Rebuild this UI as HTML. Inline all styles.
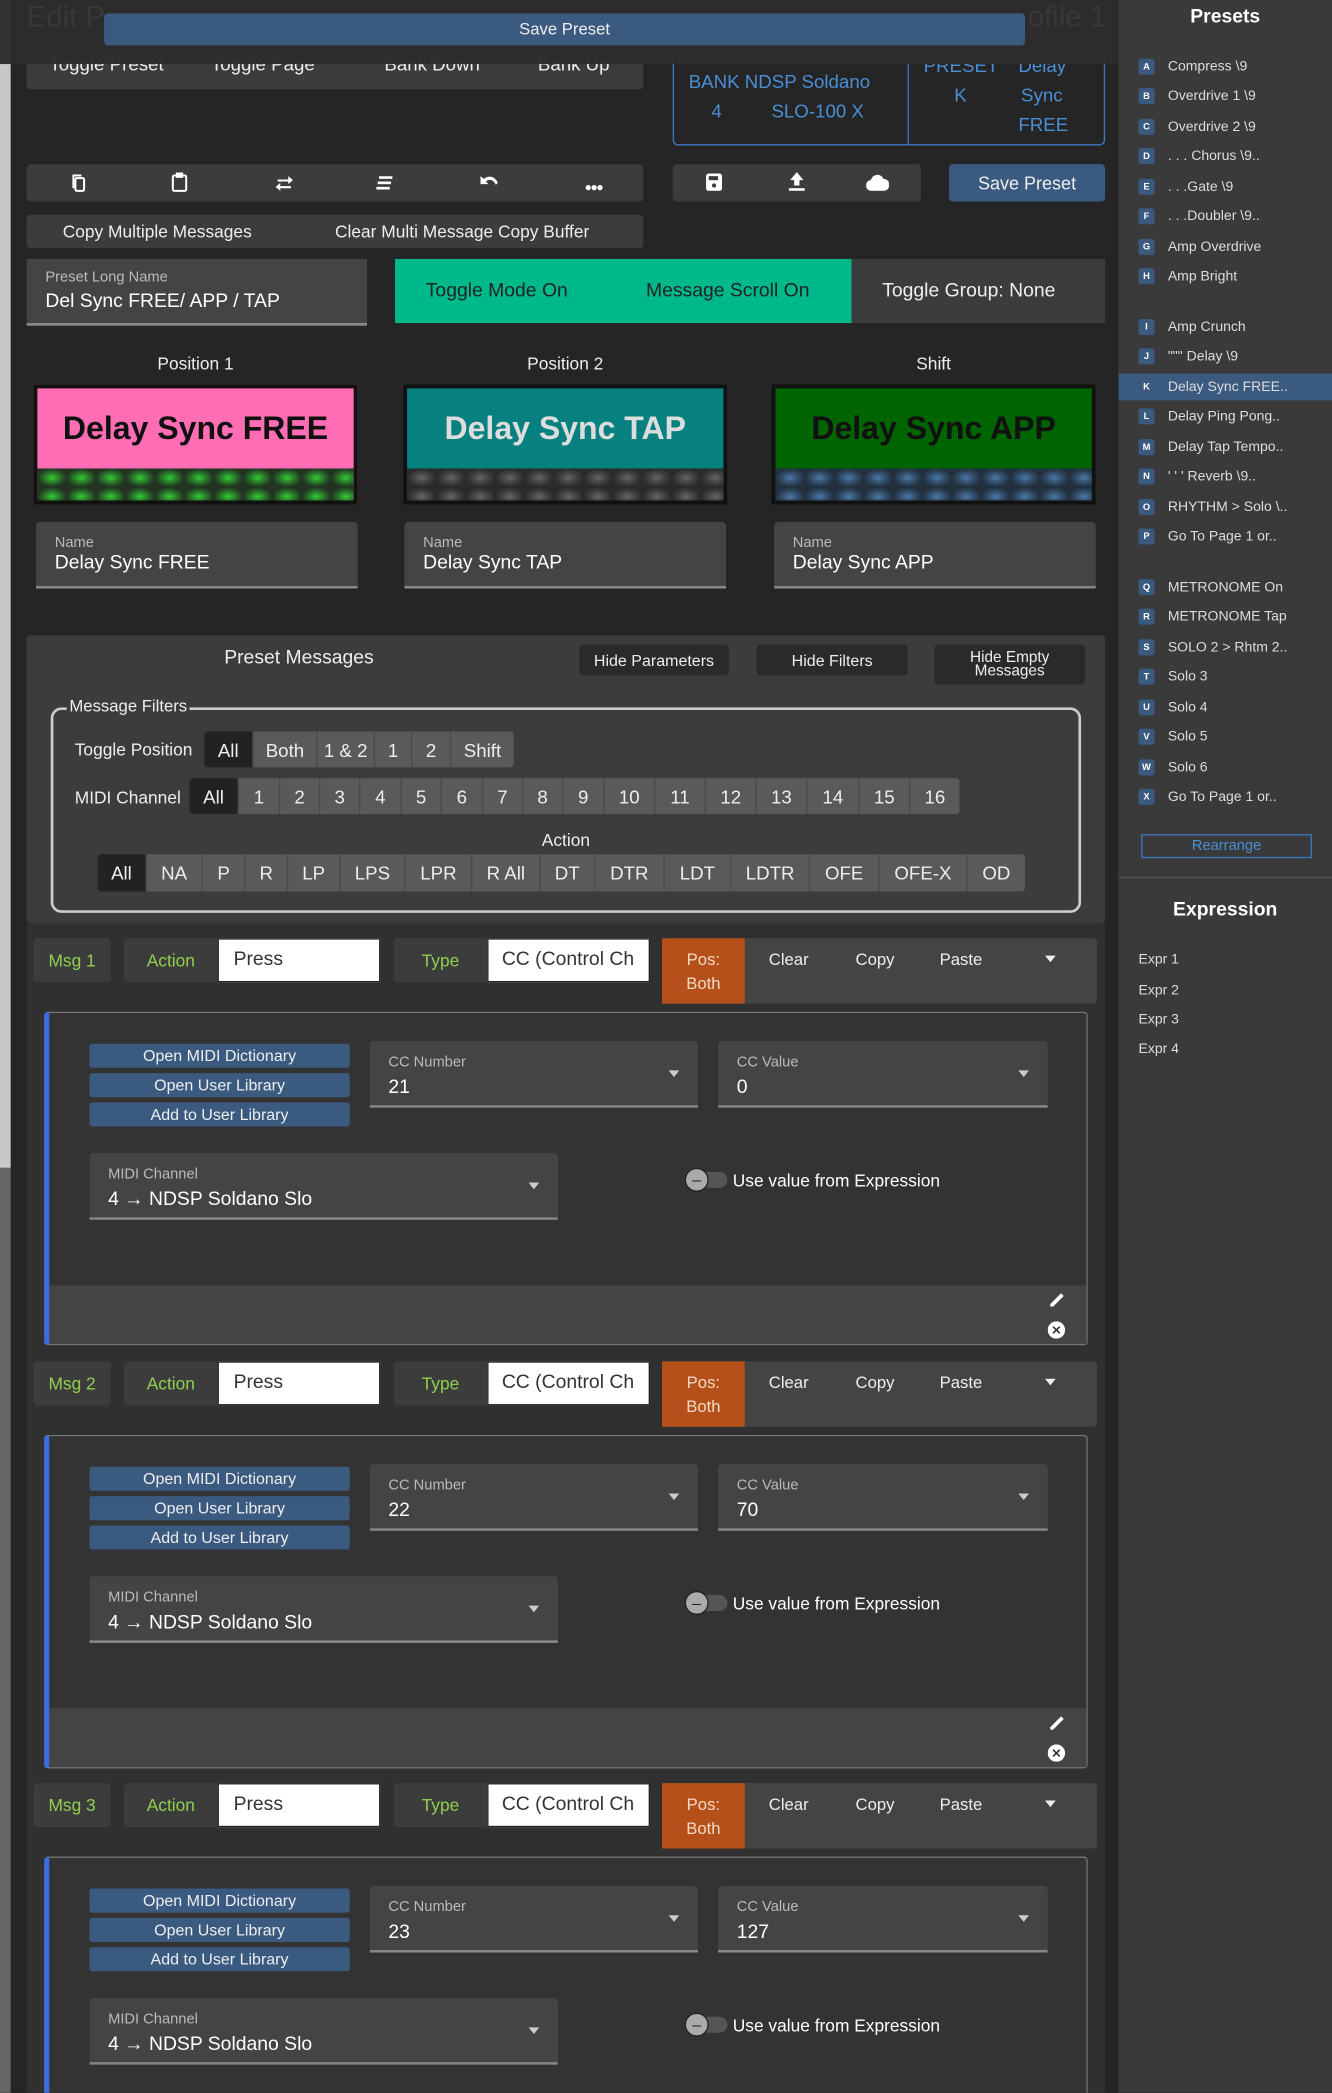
<!DOCTYPE html>
<html><head><meta charset="utf-8"><style>
*{box-sizing:border-box;margin:0;padding:0}
html,body{width:1332px;height:2092px;overflow:hidden;background:#252525}
#w{position:absolute;left:0;top:0;width:998px;height:1568px;transform:scale(1.33467);transform-origin:0 0;font-family:"Liberation Sans",sans-serif;color:#ddd;background:#252525;overflow:hidden}
.a{position:absolute}
.c{display:flex;align-items:center;justify-content:center}
.btn{background:#3c3c3c;border-radius:3px}
.blue{background:#3b5a80;color:#eee;border-radius:2px}
.seg{display:flex;position:absolute;height:27px;border-radius:3px;overflow:hidden}
.seg span{background:#5a5a5a;color:#eee;font-size:14px;display:flex;align-items:center;justify-content:center;border-right:1px solid #4a4a4a}
.seg span.on{background:#222}
.side{position:absolute;left:853px;font-size:10.5px;color:#ddd;display:flex;align-items:center}
.side b{display:inline-flex;width:12px;height:12px;background:#3b5a80;color:#fff;font-size:7px;align-items:center;justify-content:center;border-radius:2px;margin-right:10px}
.fld{position:absolute;background:#444;border-bottom:2px solid #888;border-radius:3px 3px 0 0}
.fld .l{position:absolute;left:14px;top:10px;font-size:11px;color:#bbb}
.fld .v{position:absolute;left:14px;top:27px;font-size:14.5px;color:#fff}
.fld .ar{position:absolute;right:14px;top:22px;width:0;height:0;border-left:4px solid transparent;border-right:4px solid transparent;border-top:5px solid #ccc}
.pat{position:absolute;left:0;right:0;top:60px;bottom:0;background-size:22px 14px}
</style></head><body><div id="w">
<div class="a" style="left:0;top:0;width:8px;height:875px;background:#c8c8c8"></div>
<div class="a" style="left:0;top:875px;width:8px;height:700px;background:#666"></div>
<div class="a" style="left:838px;top:0;width:160px;height:1568px;background:#3a3a3a"></div>
<div class="a" style="left:838px;top:5px;width:160px;text-align:center;font-weight:bold;font-size:14.5px;color:#fff">Presets</div>
<div class="a" style="left:838px;top:280px;width:160px;height:20px;background:#3b5a80"></div>
<div class="side" style="top:44px"><b>A</b>Compress \9</div>
<div class="side" style="top:66px"><b>B</b>Overdrive 1 \9</div>
<div class="side" style="top:89px"><b>C</b>Overdrive 2 \9</div>
<div class="side" style="top:111px"><b>D</b>. . . Chorus \9..</div>
<div class="side" style="top:134px"><b>E</b>. . .Gate \9</div>
<div class="side" style="top:156px"><b>F</b>. . .Doubler \9..</div>
<div class="side" style="top:179px"><b>G</b>Amp Overdrive</div>
<div class="side" style="top:201px"><b>H</b>Amp Bright</div>
<div class="side" style="top:239px"><b>I</b>Amp Crunch</div>
<div class="side" style="top:261px"><b>J</b>""" Delay \9</div>
<div class="side" style="top:284px"><b>K</b>Delay Sync FREE..</div>
<div class="side" style="top:306px"><b>L</b>Delay Ping Pong..</div>
<div class="side" style="top:329px"><b>M</b>Delay Tap Tempo..</div>
<div class="side" style="top:351px"><b>N</b>' ' ' Reverb \9..</div>
<div class="side" style="top:374px"><b>O</b>RHYTHM &gt; Solo \..</div>
<div class="side" style="top:396px"><b>P</b>Go To Page 1 or..</div>
<div class="side" style="top:434px"><b>Q</b>METRONOME On</div>
<div class="side" style="top:456px"><b>R</b>METRONOME Tap</div>
<div class="side" style="top:479px"><b>S</b>SOLO 2 &gt; Rhtm 2..</div>
<div class="side" style="top:501px"><b>T</b>Solo 3</div>
<div class="side" style="top:524px"><b>U</b>Solo 4</div>
<div class="side" style="top:546px"><b>V</b>Solo 5</div>
<div class="side" style="top:569px"><b>W</b>Solo 6</div>
<div class="side" style="top:591px"><b>X</b>Go To Page 1 or..</div>
<div class="a c" style="left:855px;top:625px;width:128px;height:18px;border:1px solid #3a78c2;color:#4a8fd6;font-size:11px">Rearrange</div>
<div class="a" style="left:838px;top:657px;width:160px;height:1px;background:#555"></div>
<div class="a" style="left:838px;top:674px;width:160px;text-align:center;font-weight:bold;font-size:14.5px;color:#fff">Expression</div>
<div class="a" style="left:853px;top:713px;font-size:10.5px">Expr 1</div>
<div class="a" style="left:853px;top:736px;font-size:10.5px">Expr 2</div>
<div class="a" style="left:853px;top:758px;font-size:10.5px">Expr 3</div>
<div class="a" style="left:853px;top:780px;font-size:10.5px">Expr 4</div>

<div class="a btn" style="left:20px;top:38px;width:462px;height:29px;font-size:14px;color:#eee"><span class="a" style="left:17px;top:2px">Toggle Preset</span><span class="a" style="left:138px;top:2px">Toggle Page</span><span class="a" style="left:268px;top:2px">Bank Down</span><span class="a" style="left:383px;top:2px">Bank Up</span></div>
<div class="a" style="left:504px;top:40px;width:324px;height:69px;border:1px solid #3a78c2;border-radius:0 0 4px 4px;color:#4a8fd6;font-size:14px">
<div class="a" style="left:175px;top:0;width:1px;height:68px;background:#3a78c2"></div>
<span class="a" style="left:11px;top:12px">BANK NDSP Soldano</span><span class="a" style="left:28px;top:34px">4</span><span class="a" style="left:73px;top:34px">SLO-100 X</span>
<span class="a" style="left:187px;top:0">PRESET</span><span class="a" style="left:210px;top:22px">K</span>
<span class="a" style="left:258px;top:0">Delay</span><span class="a" style="left:260px;top:22px">Sync</span><span class="a" style="left:258px;top:44px">FREE</span></div>
<div class="a" style="left:0;top:0;width:838px;height:48px;background:rgba(44,44,44,.97)"><span class="a" style="left:20px;top:0;font-size:22px;color:#383838">Edit P</span><span class="a" style="left:770px;top:0;font-size:22px;color:#383838">ofile 1</span></div>
<div class="a c blue" style="left:78px;top:10px;width:690px;height:24px;font-size:12.5px;border-radius:3px">Save Preset</div>

<div class="a btn" style="left:20px;top:123px;width:462px;height:28px">
<svg class="a" style="left:32px;top:7px" width="13" height="14" viewBox="0 0 13 14" fill="none" stroke="#fff" stroke-width="1.5"><path d="M3 11V1.5H9"/><rect x="4.5" y="3.5" width="6.5" height="9.5" rx="1"/></svg>
<svg class="a" style="left:108px;top:6px" width="13" height="15" viewBox="0 0 13 15" fill="none" stroke="#fff" stroke-width="1.5"><rect x="1.5" y="2.5" width="10" height="11.5" rx="1"/><rect x="4.5" y="1" width="4" height="2.5" fill="#fff"/></svg>
<svg class="a" style="left:186px;top:8px" width="14" height="12" viewBox="0 0 14 12" fill="#fff"><path d="M2 3.5h8V1l3.5 3L10 7V5H2z M12 8.5H4V6L.5 9 4 12V10h8z"/></svg>
<svg class="a" style="left:261px;top:9px" width="14" height="10" viewBox="0 0 14 10" fill="#fff"><rect x="3" y="0" width="10" height="2"/><rect x="2" y="4" width="10" height="2"/><rect x="1" y="8" width="10" height="2"/></svg>
<svg class="a" style="left:339px;top:8px" width="14" height="11" viewBox="0 0 14 11" fill="#fff"><path d="M1 1v6h6L5 5c3-2.5 6-1 7.5 2.5L14 6C12 1 7 0 3.5 3z"/></svg>
<div class="a" style="left:418px;top:12px;font-size:9px;color:#fff;letter-spacing:-1px">●●●</div></div>
<div class="a btn" style="left:504px;top:123px;width:186px;height:28px">
<svg class="a" style="left:25px;top:7px" width="12" height="13" viewBox="0 0 12 13"><rect width="12" height="13" rx="2" fill="#fff"/><rect x="2" y="2" width="7" height="3" fill="#3c3c3c"/><circle cx="6" cy="9" r="1.6" fill="#3c3c3c"/></svg>
<svg class="a" style="left:87px;top:6px" width="12" height="14" viewBox="0 0 12 14" fill="#fff"><path d="M6 0L11 6H8v4H4V6H1z"/><rect y="12" width="12" height="2"/></svg>
<svg class="a" style="left:145px;top:7px" width="17" height="13" viewBox="0 0 17 13" fill="#fff"><path d="M4 13a4 4 0 0 1-.5-8A5 5 0 0 1 13 4a4.5 4.5 0 0 1 0 9z"/></svg></div>
<div class="a c blue" style="left:711px;top:123px;width:117px;height:28px;font-size:13.5px;border-radius:3px">Save Preset</div>
<div class="a btn" style="left:20px;top:161px;width:462px;height:25px;font-size:13px;color:#eee"><span class="a" style="left:27px;top:5px">Copy Multiple Messages</span><span class="a" style="left:231px;top:5px">Clear Multi Message Copy Buffer</span></div>

<div class="a" style="left:20px;top:194px;width:255px;height:50px;background:#444;border-bottom:2px solid #888"><span class="a" style="left:14px;top:8px;font-size:11px;color:#bbb">Preset Long Name</span><span class="a" style="left:14px;top:24px;font-size:14.5px;color:#fff">Del Sync FREE/ APP / TAP</span></div>
<div class="a" style="left:296px;top:194px;width:342px;height:48px;background:#00b98a;font-size:14.5px;color:#222"><span class="a" style="left:23px;top:16px">Toggle Mode On</span><span class="a" style="left:188px;top:16px">Message Scroll On</span></div>
<div class="a" style="left:638px;top:194px;width:190px;height:48px;background:#3c3c3c;font-size:14.5px;color:#eee"><span class="a" style="left:23px;top:16px">Toggle Group: None</span></div>

<div class="a" style="left:25px;top:265px;width:243px;text-align:center;font-size:13px;color:#eee">Position 1</div>
<div class="a" style="left:302px;top:265px;width:243px;text-align:center;font-size:13px;color:#eee">Position 2</div>
<div class="a" style="left:578px;top:265px;width:243px;text-align:center;font-size:13px;color:#eee">Shift</div>
<div class="a" style="left:25px;top:288px;width:243px;height:90px;border:3px solid #111;background:#ff6eb4"><div class="a c" style="left:0;right:0;top:0;height:62px;font-weight:bold;font-size:24px;color:#111">Delay Sync FREE</div><div class="pat" style="background-image:radial-gradient(closest-side,#3c3 0,#2a7a2a 50%,#223322 100%)"></div></div>
<div class="a" style="left:302px;top:288px;width:243px;height:90px;border:3px solid #111;background:#078080"><div class="a c" style="left:0;right:0;top:0;height:62px;font-weight:bold;font-size:24px;color:#ddd">Delay Sync TAP</div><div class="pat" style="background-image:radial-gradient(closest-side,#666 0,#444 50%,#2a2a2a 100%)"></div></div>
<div class="a" style="left:578px;top:288px;width:243px;height:90px;border:3px solid #111;background:#006400"><div class="a c" style="left:0;right:0;top:0;height:62px;font-weight:bold;font-size:24px;color:#111">Delay Sync APP</div><div class="pat" style="background-image:radial-gradient(closest-side,#4a7aaa 0,#34506e 50%,#22303e 100%)"></div></div>
<div class="fld" style="left:27px;top:391px;width:241px;height:50px"><span class="l">Name</span><span class="v" style="top:23px">Delay Sync FREE</span></div>
<div class="fld" style="left:303px;top:391px;width:241px;height:50px"><span class="l">Name</span><span class="v" style="top:23px">Delay Sync TAP</span></div>
<div class="fld" style="left:580px;top:391px;width:241px;height:50px"><span class="l">Name</span><span class="v" style="top:23px">Delay Sync APP</span></div>

<div class="a" style="left:20px;top:476px;width:808px;height:216px;background:#3c3c3c;border-radius:3px"></div>
<div class="a" style="left:20px;top:485px;width:408px;text-align:center;font-size:14.5px;color:#eee">Preset Messages</div>
<div class="a c" style="left:434px;top:483px;width:112px;height:23px;background:#2a2a2a;border-radius:3px;font-size:12px;color:#eee">Hide Parameters</div>
<div class="a c" style="left:567px;top:483px;width:113px;height:23px;background:#2a2a2a;border-radius:3px;font-size:12px;color:#eee">Hide Filters</div>
<div class="a c" style="left:700px;top:483px;width:113px;height:30px;background:#2a2a2a;border-radius:3px;font-size:11.5px;color:#eee;line-height:10px;text-align:center">Hide Empty<br>Messages</div>
<div class="a" style="left:38px;top:530px;width:772px;height:154px;border:2px solid #ccc;border-radius:8px"></div>
<div class="a" style="left:50px;top:522px;background:#3c3c3c;padding:0 2px;font-size:12.5px;color:#eee">Message Filters</div>
<div class="a" style="left:56px;top:554px;font-size:13px;color:#eee">Toggle Position</div>
<div class="seg" style="left:153px;top:548px"><span class="on" style="width:37px">All</span><span style="width:48px">Both</span><span style="width:43px">1 &amp; 2</span><span style="width:28px">1</span><span style="width:29px">2</span><span style="width:47px;border:0">Shift</span></div>
<div class="a" style="left:56px;top:590px;font-size:13px;color:#eee">MIDI Channel</div>
<div class="seg" style="left:142px;top:583px"><span class="on" style="width:37px">All</span><span style="width:31px">1</span><span style="width:30px">2</span><span style="width:30px">3</span><span style="width:31px">4</span><span style="width:30px">5</span><span style="width:31px">6</span><span style="width:30px">7</span><span style="width:30px">8</span><span style="width:31px">9</span><span style="width:38px">10</span><span style="width:38px">11</span><span style="width:38px">12</span><span style="width:38px">13</span><span style="width:39px">14</span><span style="width:38px">15</span><span style="width:37px;border:0">16</span></div>
<div class="a" style="left:20px;top:622px;width:808px;text-align:center;font-size:13px;color:#eee">Action</div>
<div class="seg" style="left:73px;top:640px;height:28px"><span class="on" style="width:37px">All</span><span style="width:42px">NA</span><span style="width:32px">P</span><span style="width:32px">R</span><span style="width:39px">LP</span><span style="width:49px">LPS</span><span style="width:50px">LPR</span><span style="width:51px">R All</span><span style="width:41px">DT</span><span style="width:52px">DTR</span><span style="width:50px">LDT</span><span style="width:59px">LDTR</span><span style="width:52px">OFE</span><span style="width:66px">OFE-X</span><span style="width:43px;border:0">OD</span></div>

<div class="a" style="left:20px;top:692px;width:808px;height:880px;background:#303030"></div>

<div class="a" style="left:0;top:703px;width:838px;height:310px">
<div class="a btn c" style="left:25px;top:0;width:58px;height:33px;color:#8fd14f;font-size:13px;background:#3c3c3c">Msg 1</div>
<div class="a c" style="left:93px;top:0;width:70px;height:33px;background:#3c3c3c;color:#8fd14f;font-size:13px;border-radius:3px 0 0 3px">Action</div>
<div class="a" style="left:163px;top:0;width:122px;height:33px;background:#fff;border:1px solid #222;color:#333;font-size:14.5px;padding:7px 11px">Press</div>
<div class="a c" style="left:295px;top:0;width:70px;height:33px;background:#3c3c3c;color:#8fd14f;font-size:13px;border-radius:3px 0 0 3px">Type</div>
<div class="a" style="left:365px;top:0;width:122px;height:33px;background:#fff;border:1px solid #222;color:#333;font-size:14.5px;padding:7px 10px;white-space:nowrap;overflow:hidden">CC (Control Ch</div>
<div class="a" style="left:496px;top:0;width:326px;height:49px;background:#444;border-radius:3px;font-size:12.5px;color:#eee"><div class="a" style="left:0;top:0;width:62px;height:49px;background:#b5501a;text-align:center;line-height:18px;padding-top:7px;color:#f3d9c6">Pos:<br>Both</div><span class="a" style="left:80px;top:9px">Clear</span><span class="a" style="left:145px;top:9px">Copy</span><span class="a" style="left:208px;top:9px">Paste</span><span class="a" style="left:287px;top:13px;border-left:4px solid transparent;border-right:4px solid transparent;border-top:5px solid #eee"></span></div>
<div class="a" style="left:33px;top:55px;width:782px;height:250px;background:#333;border:1px solid #777;border-left:4px solid #3a6ee0;border-radius:3px">
<div class="a" style="left:0;right:0;top:204px;bottom:0;background:#444"></div>
<svg class="a" style="left:748px;top:208px" width="14" height="14" viewBox="0 0 14 14" fill="#fff"><path d="M2 10L10 2l2 2-8 8H2z"/></svg>
<svg class="a" style="left:748px;top:231px" width="13" height="13" viewBox="0 0 13 13"><circle cx="6.5" cy="6.5" r="6.5" fill="#fff"/><path d="M4 4l5 5M9 4l-5 5" stroke="#333" stroke-width="1.2"/></svg>
<div class="a c blue" style="left:30px;top:23px;width:195px;height:18px;font-size:12px">Open MIDI Dictionary</div>
<div class="a c blue" style="left:30px;top:45px;width:195px;height:18px;font-size:12px">Open User Library</div>
<div class="a c blue" style="left:30px;top:67px;width:195px;height:18px;font-size:12px">Add to User Library</div>
<div class="fld" style="left:240px;top:21px;width:246px;height:50px"><span class="l">CC Number</span><span class="v">21</span><span class="ar"></span></div>
<div class="fld" style="left:501px;top:21px;width:247px;height:50px"><span class="l">CC Value</span><span class="v">0</span><span class="ar"></span></div>
<div class="fld" style="left:30px;top:105px;width:351px;height:50px"><span class="l">MIDI Channel</span><span class="v">4 → NDSP Soldano Slo</span><span class="ar"></span></div>
<div class="a" style="left:478px;top:119px;width:30px;height:12px;border-radius:6px;background:#555"></div>
<div class="a c" style="left:476px;top:116px;width:18px;height:18px;border-radius:9px;background:#aaa;border:1px solid #222;font-size:12px;color:#222;line-height:1">–</div>
<div class="a" style="left:512px;top:118px;font-size:13px;color:#fff">Use value from Expression</div>
</div></div>

<div class="a" style="left:0;top:1020px;width:838px;height:310px">
<div class="a btn c" style="left:25px;top:0;width:58px;height:33px;color:#8fd14f;font-size:13px;background:#3c3c3c">Msg 2</div>
<div class="a c" style="left:93px;top:0;width:70px;height:33px;background:#3c3c3c;color:#8fd14f;font-size:13px;border-radius:3px 0 0 3px">Action</div>
<div class="a" style="left:163px;top:0;width:122px;height:33px;background:#fff;border:1px solid #222;color:#333;font-size:14.5px;padding:7px 11px">Press</div>
<div class="a c" style="left:295px;top:0;width:70px;height:33px;background:#3c3c3c;color:#8fd14f;font-size:13px;border-radius:3px 0 0 3px">Type</div>
<div class="a" style="left:365px;top:0;width:122px;height:33px;background:#fff;border:1px solid #222;color:#333;font-size:14.5px;padding:7px 10px;white-space:nowrap;overflow:hidden">CC (Control Ch</div>
<div class="a" style="left:496px;top:0;width:326px;height:49px;background:#444;border-radius:3px;font-size:12.5px;color:#eee"><div class="a" style="left:0;top:0;width:62px;height:49px;background:#b5501a;text-align:center;line-height:18px;padding-top:7px;color:#f3d9c6">Pos:<br>Both</div><span class="a" style="left:80px;top:9px">Clear</span><span class="a" style="left:145px;top:9px">Copy</span><span class="a" style="left:208px;top:9px">Paste</span><span class="a" style="left:287px;top:13px;border-left:4px solid transparent;border-right:4px solid transparent;border-top:5px solid #eee"></span></div>
<div class="a" style="left:33px;top:55px;width:782px;height:250px;background:#333;border:1px solid #777;border-left:4px solid #3a6ee0;border-radius:3px">
<div class="a" style="left:0;right:0;top:204px;bottom:0;background:#444"></div>
<svg class="a" style="left:748px;top:208px" width="14" height="14" viewBox="0 0 14 14" fill="#fff"><path d="M2 10L10 2l2 2-8 8H2z"/></svg>
<svg class="a" style="left:748px;top:231px" width="13" height="13" viewBox="0 0 13 13"><circle cx="6.5" cy="6.5" r="6.5" fill="#fff"/><path d="M4 4l5 5M9 4l-5 5" stroke="#333" stroke-width="1.2"/></svg>
<div class="a c blue" style="left:30px;top:23px;width:195px;height:18px;font-size:12px">Open MIDI Dictionary</div>
<div class="a c blue" style="left:30px;top:45px;width:195px;height:18px;font-size:12px">Open User Library</div>
<div class="a c blue" style="left:30px;top:67px;width:195px;height:18px;font-size:12px">Add to User Library</div>
<div class="fld" style="left:240px;top:21px;width:246px;height:50px"><span class="l">CC Number</span><span class="v">22</span><span class="ar"></span></div>
<div class="fld" style="left:501px;top:21px;width:247px;height:50px"><span class="l">CC Value</span><span class="v">70</span><span class="ar"></span></div>
<div class="fld" style="left:30px;top:105px;width:351px;height:50px"><span class="l">MIDI Channel</span><span class="v">4 → NDSP Soldano Slo</span><span class="ar"></span></div>
<div class="a" style="left:478px;top:119px;width:30px;height:12px;border-radius:6px;background:#555"></div>
<div class="a c" style="left:476px;top:116px;width:18px;height:18px;border-radius:9px;background:#aaa;border:1px solid #222;font-size:12px;color:#222;line-height:1">–</div>
<div class="a" style="left:512px;top:118px;font-size:13px;color:#fff">Use value from Expression</div>
</div></div>

<div class="a" style="left:0;top:1336px;width:838px;height:310px">
<div class="a btn c" style="left:25px;top:0;width:58px;height:33px;color:#8fd14f;font-size:13px;background:#3c3c3c">Msg 3</div>
<div class="a c" style="left:93px;top:0;width:70px;height:33px;background:#3c3c3c;color:#8fd14f;font-size:13px;border-radius:3px 0 0 3px">Action</div>
<div class="a" style="left:163px;top:0;width:122px;height:33px;background:#fff;border:1px solid #222;color:#333;font-size:14.5px;padding:7px 11px">Press</div>
<div class="a c" style="left:295px;top:0;width:70px;height:33px;background:#3c3c3c;color:#8fd14f;font-size:13px;border-radius:3px 0 0 3px">Type</div>
<div class="a" style="left:365px;top:0;width:122px;height:33px;background:#fff;border:1px solid #222;color:#333;font-size:14.5px;padding:7px 10px;white-space:nowrap;overflow:hidden">CC (Control Ch</div>
<div class="a" style="left:496px;top:0;width:326px;height:49px;background:#444;border-radius:3px;font-size:12.5px;color:#eee"><div class="a" style="left:0;top:0;width:62px;height:49px;background:#b5501a;text-align:center;line-height:18px;padding-top:7px;color:#f3d9c6">Pos:<br>Both</div><span class="a" style="left:80px;top:9px">Clear</span><span class="a" style="left:145px;top:9px">Copy</span><span class="a" style="left:208px;top:9px">Paste</span><span class="a" style="left:287px;top:13px;border-left:4px solid transparent;border-right:4px solid transparent;border-top:5px solid #eee"></span></div>
<div class="a" style="left:33px;top:55px;width:782px;height:250px;background:#333;border:1px solid #777;border-left:4px solid #3a6ee0;border-radius:3px">
<div class="a c blue" style="left:30px;top:23px;width:195px;height:18px;font-size:12px">Open MIDI Dictionary</div>
<div class="a c blue" style="left:30px;top:45px;width:195px;height:18px;font-size:12px">Open User Library</div>
<div class="a c blue" style="left:30px;top:67px;width:195px;height:18px;font-size:12px">Add to User Library</div>
<div class="fld" style="left:240px;top:21px;width:246px;height:50px"><span class="l">CC Number</span><span class="v">23</span><span class="ar"></span></div>
<div class="fld" style="left:501px;top:21px;width:247px;height:50px"><span class="l">CC Value</span><span class="v">127</span><span class="ar"></span></div>
<div class="fld" style="left:30px;top:105px;width:351px;height:50px"><span class="l">MIDI Channel</span><span class="v">4 → NDSP Soldano Slo</span><span class="ar"></span></div>
<div class="a" style="left:478px;top:119px;width:30px;height:12px;border-radius:6px;background:#555"></div>
<div class="a c" style="left:476px;top:116px;width:18px;height:18px;border-radius:9px;background:#aaa;border:1px solid #222;font-size:12px;color:#222;line-height:1">–</div>
<div class="a" style="left:512px;top:118px;font-size:13px;color:#fff">Use value from Expression</div>
</div></div>
</div></body></html>
